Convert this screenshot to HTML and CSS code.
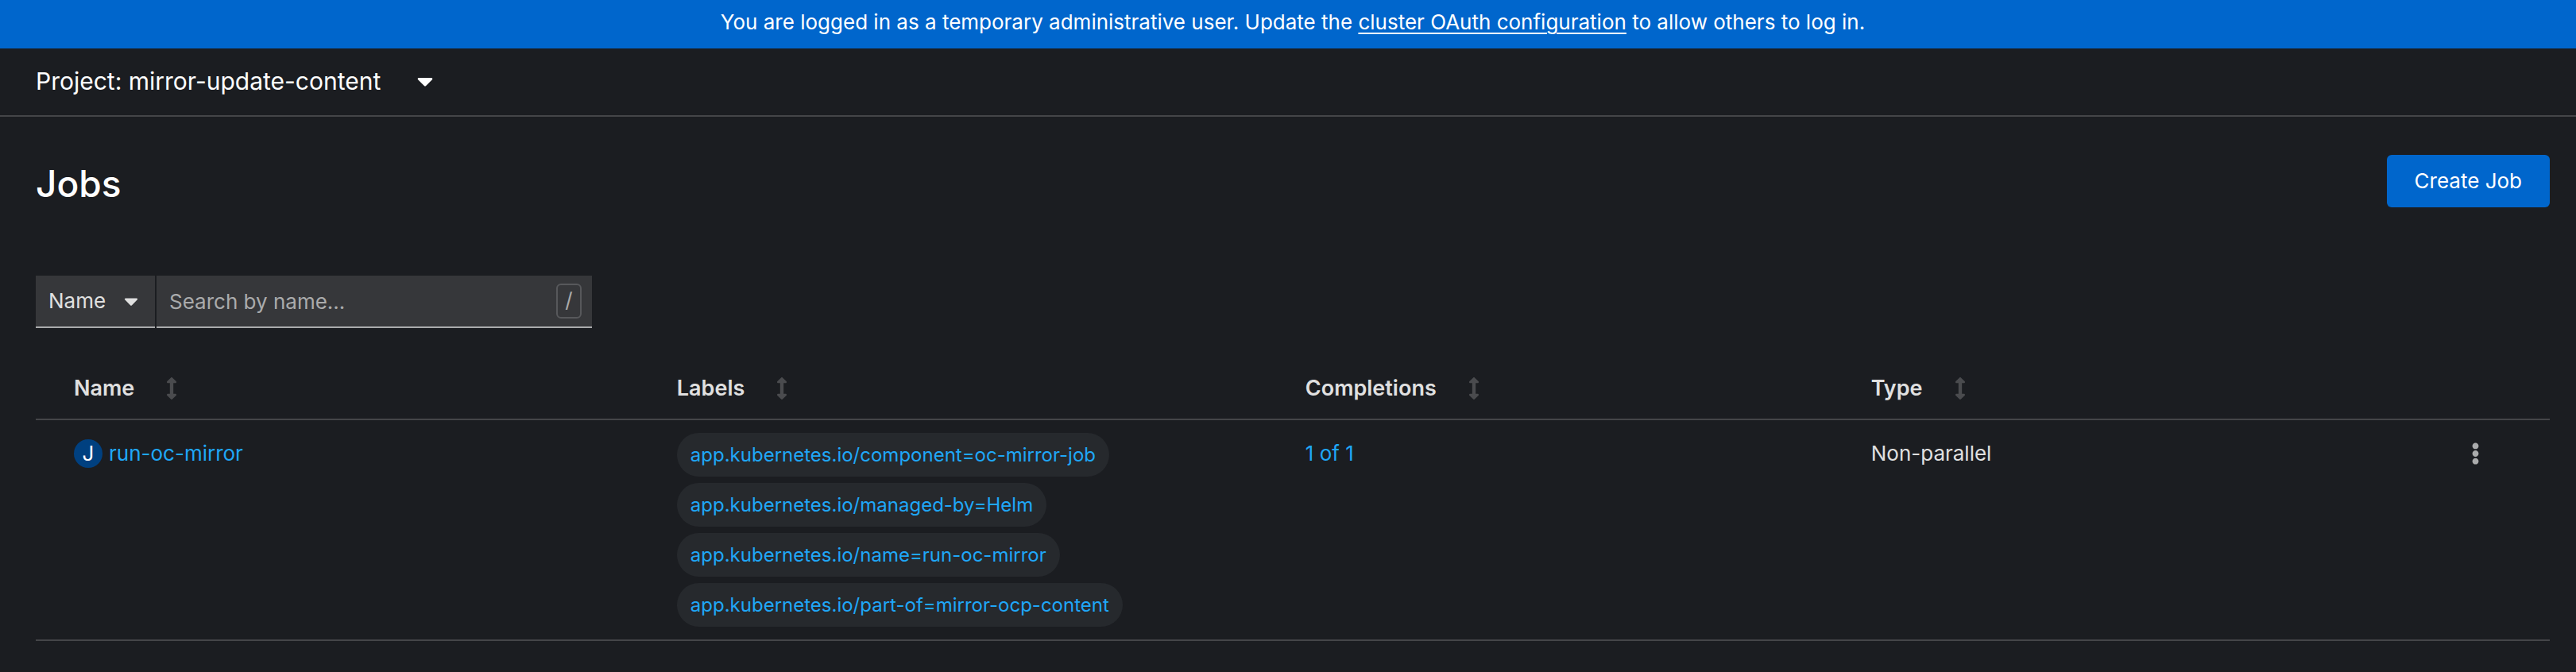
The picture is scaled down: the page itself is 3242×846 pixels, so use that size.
FILE: index.html
```html
<!DOCTYPE html>
<html lang="en">
<head>
<meta charset="utf-8">
<meta name="viewport" content="width=device-width, initial-scale=1">
<title>Jobs</title>
<link rel="stylesheet" href="styles.css">
</head>
<body>
<svg class="sprite" aria-hidden="true">
  <symbol id="caret" viewBox="0 0 320 512"><path d="M31.3 192h257.3c17.8 0 26.7 21.5 14.1 34.1L174.1 354.8c-7.8 7.8-20.5 7.8-28.3 0L17.2 226.1C4.6 213.5 13.5 192 31.3 192z"/></symbol>
  <symbol id="sort" viewBox="0 0 256 512"><path d="M214.059 377.941H168V134.059h46.059c21.382 0 32.09-25.851 16.971-40.971L144.971 7.029c-9.373-9.373-24.568-9.373-33.941 0L24.971 93.088c-15.119 15.119-4.411 40.971 16.971 40.971H88v243.882H41.941c-21.382 0-32.09 25.851-16.971 40.971l86.059 86.059c9.373 9.373 24.568 9.373 33.941 0l86.059-86.059c15.12-15.119 4.412-40.971-16.97-40.971z"/></symbol>
  <symbol id="kebab" viewBox="0 0 192 512"><path d="M96 184c39.8 0 72 32.2 72 72s-32.2 72-72 72-72-32.2-72-72 32.2-72 72-72zM24 80c0 39.8 32.2 72 72 72s72-32.2 72-72S135.8 8 96 8 24 40.2 24 80zm0 352c0 39.8 32.2 72 72 72s72-32.2 72-72-32.2-72-72-72-72 32.2-72 72z"/></symbol>
</svg>

<div class="banner">You are logged in as a temporary administrative user. Update the <a href="#oauth">cluster OAuth configuration</a> to allow others to log in.</div>

<nav class="project-bar">
  <button class="project-toggle" type="button">Project: mirror-update-content <svg class="icon-caret-lg" aria-hidden="true"><use href="#caret"/></svg></button>
</nav>

<main class="page">
  <header class="page-header">
    <h1 class="page-title">Jobs</h1>
    <button class="button-primary" type="button">Create Job</button>
  </header>

  <div class="toolbar">
    <div class="filter">
      <select class="filter-select" aria-label="Filter by">
        <option>Name</option>
        <option>Label</option>
      </select>
      <svg class="icon-caret" aria-hidden="true"><use href="#caret"/></svg>
    </div>
    <div class="search">
      <input class="search-input" type="text" placeholder="Search by name..." aria-label="Search by name">
      <kbd class="shortcut">/</kbd>
    </div>
  </div>

  <table class="jobs">
    <colgroup><col class="col-name"><col class="col-labels"><col class="col-completions"><col><col class="col-actions"></colgroup>
    <thead>
      <tr>
        <th scope="col"><button class="sort" type="button">Name <svg class="icon-sort" aria-hidden="true"><use href="#sort"/></svg></button></th>
        <th scope="col"><button class="sort" type="button">Labels <svg class="icon-sort" aria-hidden="true"><use href="#sort"/></svg></button></th>
        <th scope="col"><button class="sort" type="button">Completions <svg class="icon-sort" aria-hidden="true"><use href="#sort"/></svg></button></th>
        <th scope="col"><button class="sort" type="button">Type <svg class="icon-sort" aria-hidden="true"><use href="#sort"/></svg></button></th>
        <td></td>
      </tr>
    </thead>
    <tbody>
      <tr>
        <td><div class="resource"><span class="badge">J</span><a href="#job">run-oc-mirror</a></div></td>
        <td class="cell-labels">
          <ul class="labels">
            <li><a class="label" href="#component">app.kubernetes.io/component=oc-mirror-job</a></li>
            <li><a class="label" href="#managed-by">app.kubernetes.io/managed-by=Helm</a></li>
            <li><a class="label" href="#name">app.kubernetes.io/name=run-oc-mirror</a></li>
            <li><a class="label" href="#part-of">app.kubernetes.io/part-of=mirror-ocp-content</a></li>
          </ul>
        </td>
        <td><a href="#pods">1 of 1</a></td>
        <td>Non-parallel</td>
        <td><button class="kebab" type="button" aria-label="Actions"><svg class="icon-kebab" aria-hidden="true"><use href="#kebab"/></svg></button></td>
      </tr>
    </tbody>
  </table>
</main>
</body>
</html>
```
FILE: styles.css
```css
:root {
  --bg: #1b1d21;
  --control: #36373a;
  --line: #444548;
  --text: #e0e0e0;
  --muted: #aaabac;
  --link: #1fa7f8;
  --blue: #0066cc;
}

* { box-sizing: border-box; }

body {
  margin: 0;
  background: var(--bg);
  color: var(--text);
  font: 400 26px/36px Inter, "Liberation Sans", sans-serif;
}

button, input, select { font: inherit; color: inherit; margin: 0; border: 0; border-radius: 0; }
button { padding: 0; background: none; cursor: pointer; }
a { color: var(--link); text-decoration: none; }
svg { fill: currentColor; flex: none; }
.sprite { display: none; }

.banner {
  padding: 10px 32px 15px 44px;
  background: var(--blue);
  color: #fff;
  text-align: center;
}
.banner a { color: inherit; text-decoration: underline; text-decoration-thickness: 2px; text-underline-offset: 4px; }

.project-bar {
  display: flex;
  padding: 17px 45px 19px;
  border-bottom: 2px solid var(--line);
}
.project-toggle {
  display: flex;
  align-items: center;
  gap: 46px;
  color: #fff;
  font-size: 30px;
  line-height: 48px;
}
.icon-caret-lg { width: 20px; height: 32px; }

.page { padding: 48px 33px 0 45px; }

.page-header {
  display: flex;
  align-items: center;
  justify-content: space-between;
  margin-bottom: 86px;
}
.page-title { margin: 0; padding-top: 6px; color: #fff; font-size: 46px; font-weight: 500; line-height: 60px; }
.button-primary {
  padding: 15px 35px;
  border-radius: 6px;
  background: var(--blue);
  color: #fff;
}

.toolbar { display: flex; gap: 2px; margin-bottom: 38px; }
.filter, .search {
  display: grid;
  align-items: center;
  height: 66px;
  background: var(--control);
  border-bottom: 2px solid var(--muted);
}
.filter { width: 150px; }
.filter > *, .search > * { grid-area: 1 / 1; }
.filter-select {
  width: 100%;
  height: 100%;
  padding: 0 48px 0 16px;
  appearance: none;
  background: transparent;
}
.filter-select option { background: var(--control); }
.icon-caret {
  width: 18px;
  height: 28px;
  margin-right: 21px;
  justify-self: end;
  pointer-events: none;
}
.search { width: 548px; }
.search-input {
  width: 100%;
  height: 100%;
  padding: 0 64px 0 16px;
  background: transparent;
}
.search-input::placeholder { color: var(--muted); opacity: 1; }
.shortcut {
  width: 32px;
  height: 44px;
  margin-right: 13px;
  justify-self: end;
  border: 2px solid #57585b;
  border-radius: 6px;
  color: var(--muted);
  font: inherit;
  line-height: 38px;
  text-align: center;
}

.jobs { width: 100%; table-layout: fixed; border-collapse: separate; border-spacing: 0; }
.col-name { width: 25.5%; }
.col-labels { width: 25%; }
.col-completions { width: 22.5%; }
.col-actions { width: 114px; }
.jobs th, .jobs td {
  padding: 24px 16px 24px 0;
  border-bottom: 2px solid var(--line);
  text-align: left;
  vertical-align: top;
}
.jobs th { padding: 20px 16px 20px 0; }
.jobs th:first-child, .jobs td:first-child { padding-left: 48px; }
.jobs .cell-labels { padding: 16px 16px 16px 0; }

.sort { display: flex; align-items: center; gap: 40px; font-size: 27px; font-weight: 600; }
.icon-sort { width: 14px; height: 28px; color: #4a4b4e; }

.resource { display: flex; gap: 8px; }
.badge {
  width: 36px;
  height: 36px;
  border-radius: 50%;
  background: #004080;
  color: #fff;
  text-align: center;
}

.labels { display: grid; gap: 8px; justify-items: start; margin: 0; padding: 0; list-style: none; }
.label {
  display: block;
  padding: 0 17px;
  border-radius: 28px;
  background: #26292d;
  font-size: 24px;
  line-height: 55px;
}

.kebab { display: flex; align-items: center; justify-content: center; width: 40px; height: 36px; color: var(--muted); }
.icon-kebab { width: 11px; height: 28px; }
```
